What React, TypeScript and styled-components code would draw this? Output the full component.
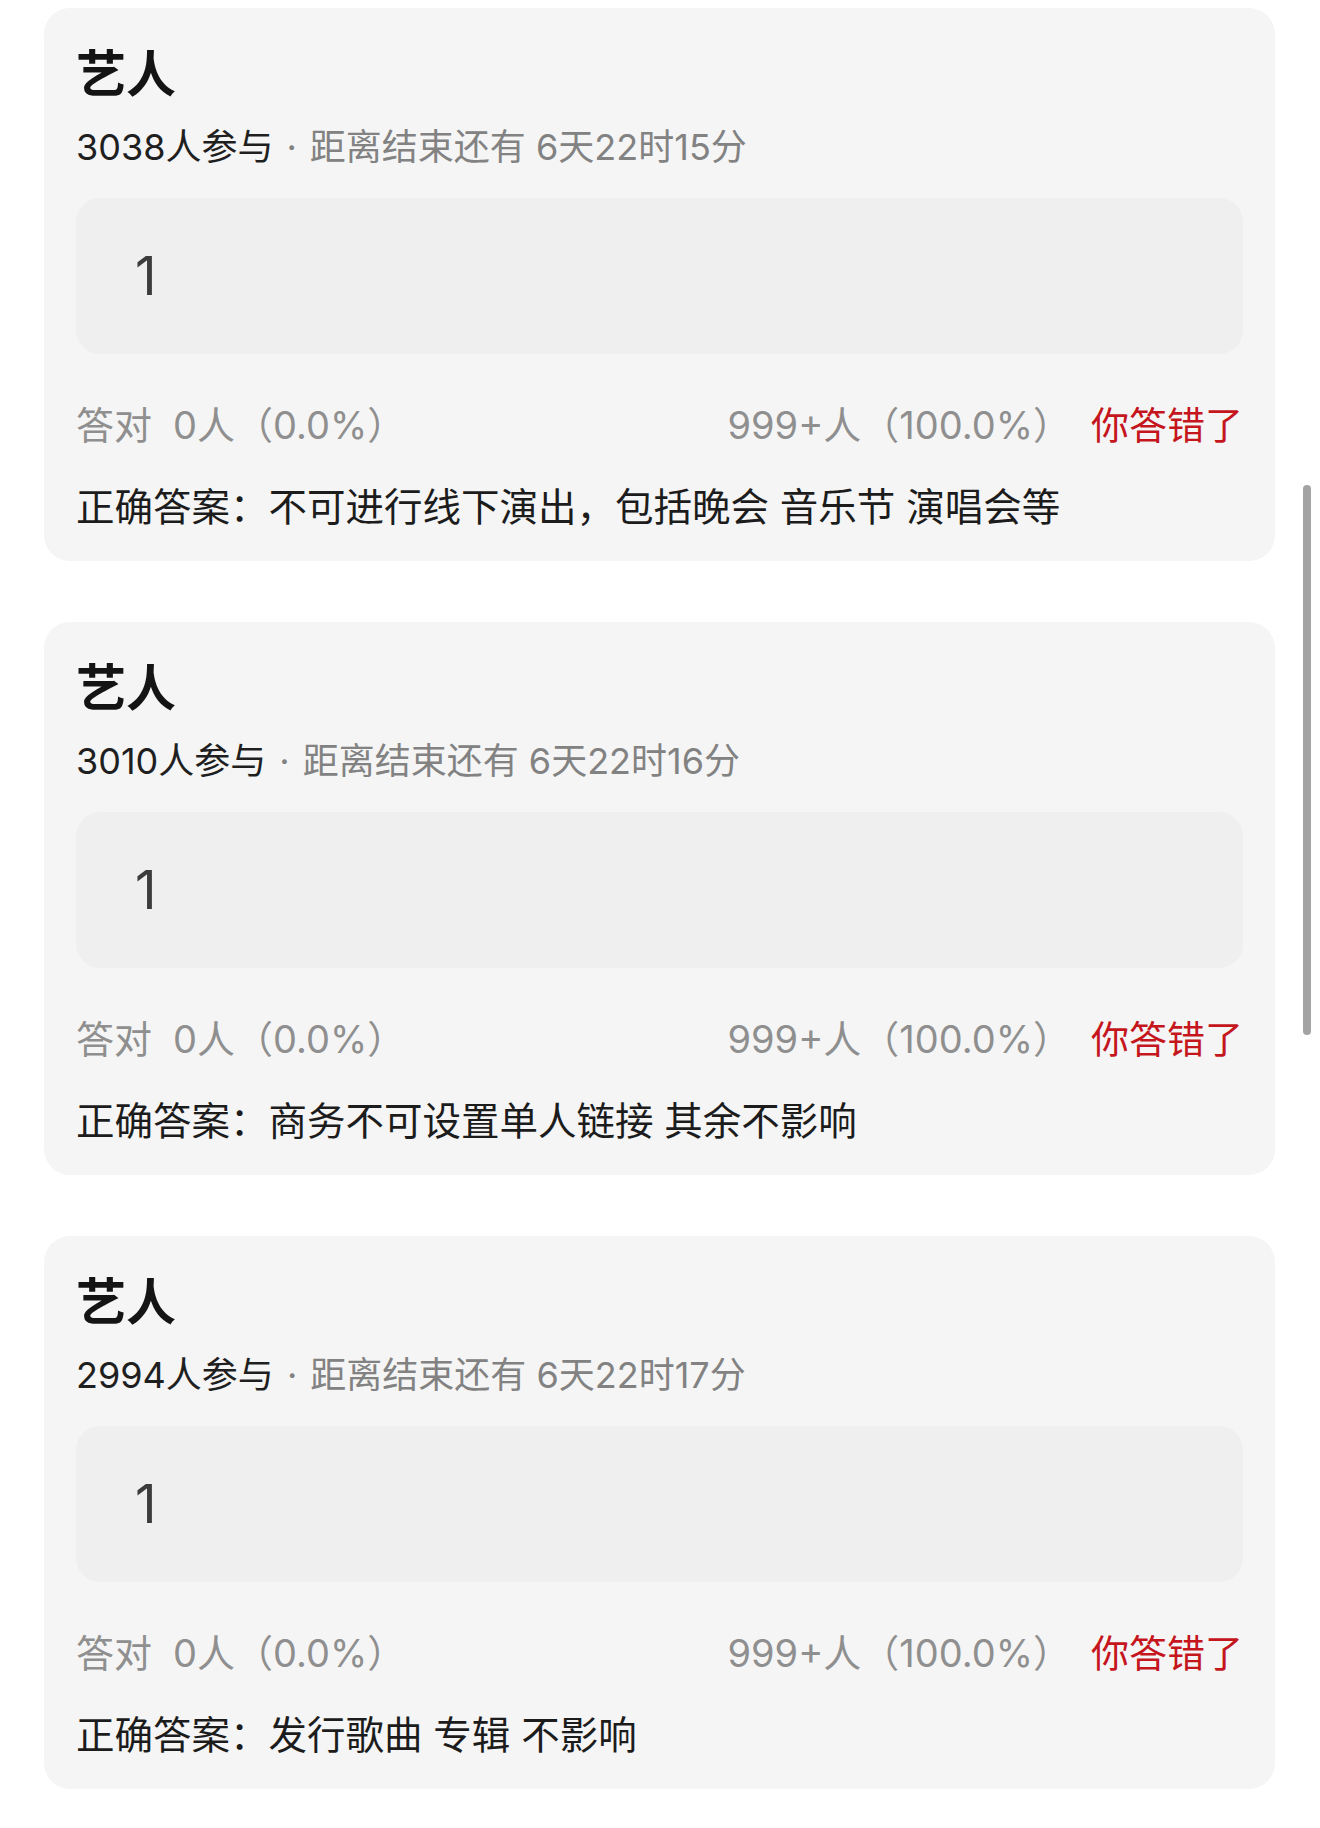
import React, { FC } from 'react';
import styled, { createGlobalStyle } from 'styled-components';

const GlobalStyle = createGlobalStyle`
  html,
  body {
    margin: 0;
    padding: 0;
    background: #ffffff;
  }

  body {
    font-family: Inter, 'Noto Sans CJK SC', sans-serif;
    -webkit-font-smoothing: antialiased;
  }
`;

const Page = styled.main`
  width: 1320px;
  min-height: 1828px;
  box-sizing: border-box;
  padding: 8px 45px 0 44px;
  display: flex;
  flex-direction: column;
  gap: 61px;
`;

const Card = styled.section`
  box-sizing: border-box;
  height: 553px;
  padding: 36px 32px 0;
  background: #f5f5f5;
  border-radius: 26px;
  display: flex;
  flex-direction: column;
`;

const Title = styled.h2`
  margin: 0;
  font-size: 50px;
  line-height: 60px;
  font-weight: 700;
  color: #141414;
`;

const Meta = styled.div`
  margin-top: 21px;
  font-size: 36px;
  line-height: 44px;
  color: #828282;
  white-space: nowrap;
`;

const Joined = styled.span`
  color: #1f1f1f;
`;

const Dot = styled.span`
  margin: 0 13px;
`;

const AnswerBox = styled.div`
  margin-top: 29px;
  height: 156px;
  box-sizing: border-box;
  padding-left: 59px;
  border-radius: 24px;
  background: #efefef;
  display: flex;
  align-items: center;
  font-size: 53px;
  color: #3c3c3c;
`;

const Stats = styled.div`
  margin-top: 46px;
  display: flex;
  justify-content: space-between;
  align-items: center;
  font-size: 38px;
  line-height: 50px;
  color: #8f8f8f;
  white-space: nowrap;
`;

const StatGroup = styled.div`
  display: flex;
  align-items: center;
`;

const Count = styled.span`
  margin-left: 21px;
`;

const Verdict = styled.span`
  margin-left: 20px;
  color: #c4161c;
`;

const Correct = styled.div`
  margin-top: 32px;
  font-size: 38.5px;
  line-height: 50px;
  color: #1c1c1c;
  white-space: nowrap;
`;

const Scrollbar = styled.div`
  position: absolute;
  top: 485px;
  left: 1303px;
  width: 8px;
  height: 550px;
  border-radius: 4px;
  background: #a3a3a3;
`;

type Quiz = {
  joined: number;
  remain: string;
  answer: string;
};

const quizzes: Quiz[] = [
  { joined: 3038, remain: '6天22时15分', answer: '不可进行线下演出，包括晚会 音乐节 演唱会等' },
  { joined: 3010, remain: '6天22时16分', answer: '商务不可设置单人链接 其余不影响' },
  { joined: 2994, remain: '6天22时17分', answer: '发行歌曲 专辑 不影响' },
];

const QuizCard: FC<{ quiz: Quiz }> = ({ quiz }) => (
  <Card>
    <Title>艺人</Title>
    <Meta>
      <Joined>{quiz.joined}人参与</Joined>
      <Dot>·</Dot>
      距离结束还有 {quiz.remain}
    </Meta>
    <AnswerBox>1</AnswerBox>
    <Stats>
      <StatGroup>
        答对<Count>0人（0.0%）</Count>
      </StatGroup>
      <StatGroup>
        999+人（100.0%）<Verdict>你答错了</Verdict>
      </StatGroup>
    </Stats>
    <Correct>正确答案：{quiz.answer}</Correct>
  </Card>
);

const App: FC = () => (
  <>
    <GlobalStyle />
    <Page>
      {quizzes.map((q) => (
        <QuizCard key={q.joined} quiz={q} />
      ))}
    </Page>
    <Scrollbar />
  </>
);

export default App;
